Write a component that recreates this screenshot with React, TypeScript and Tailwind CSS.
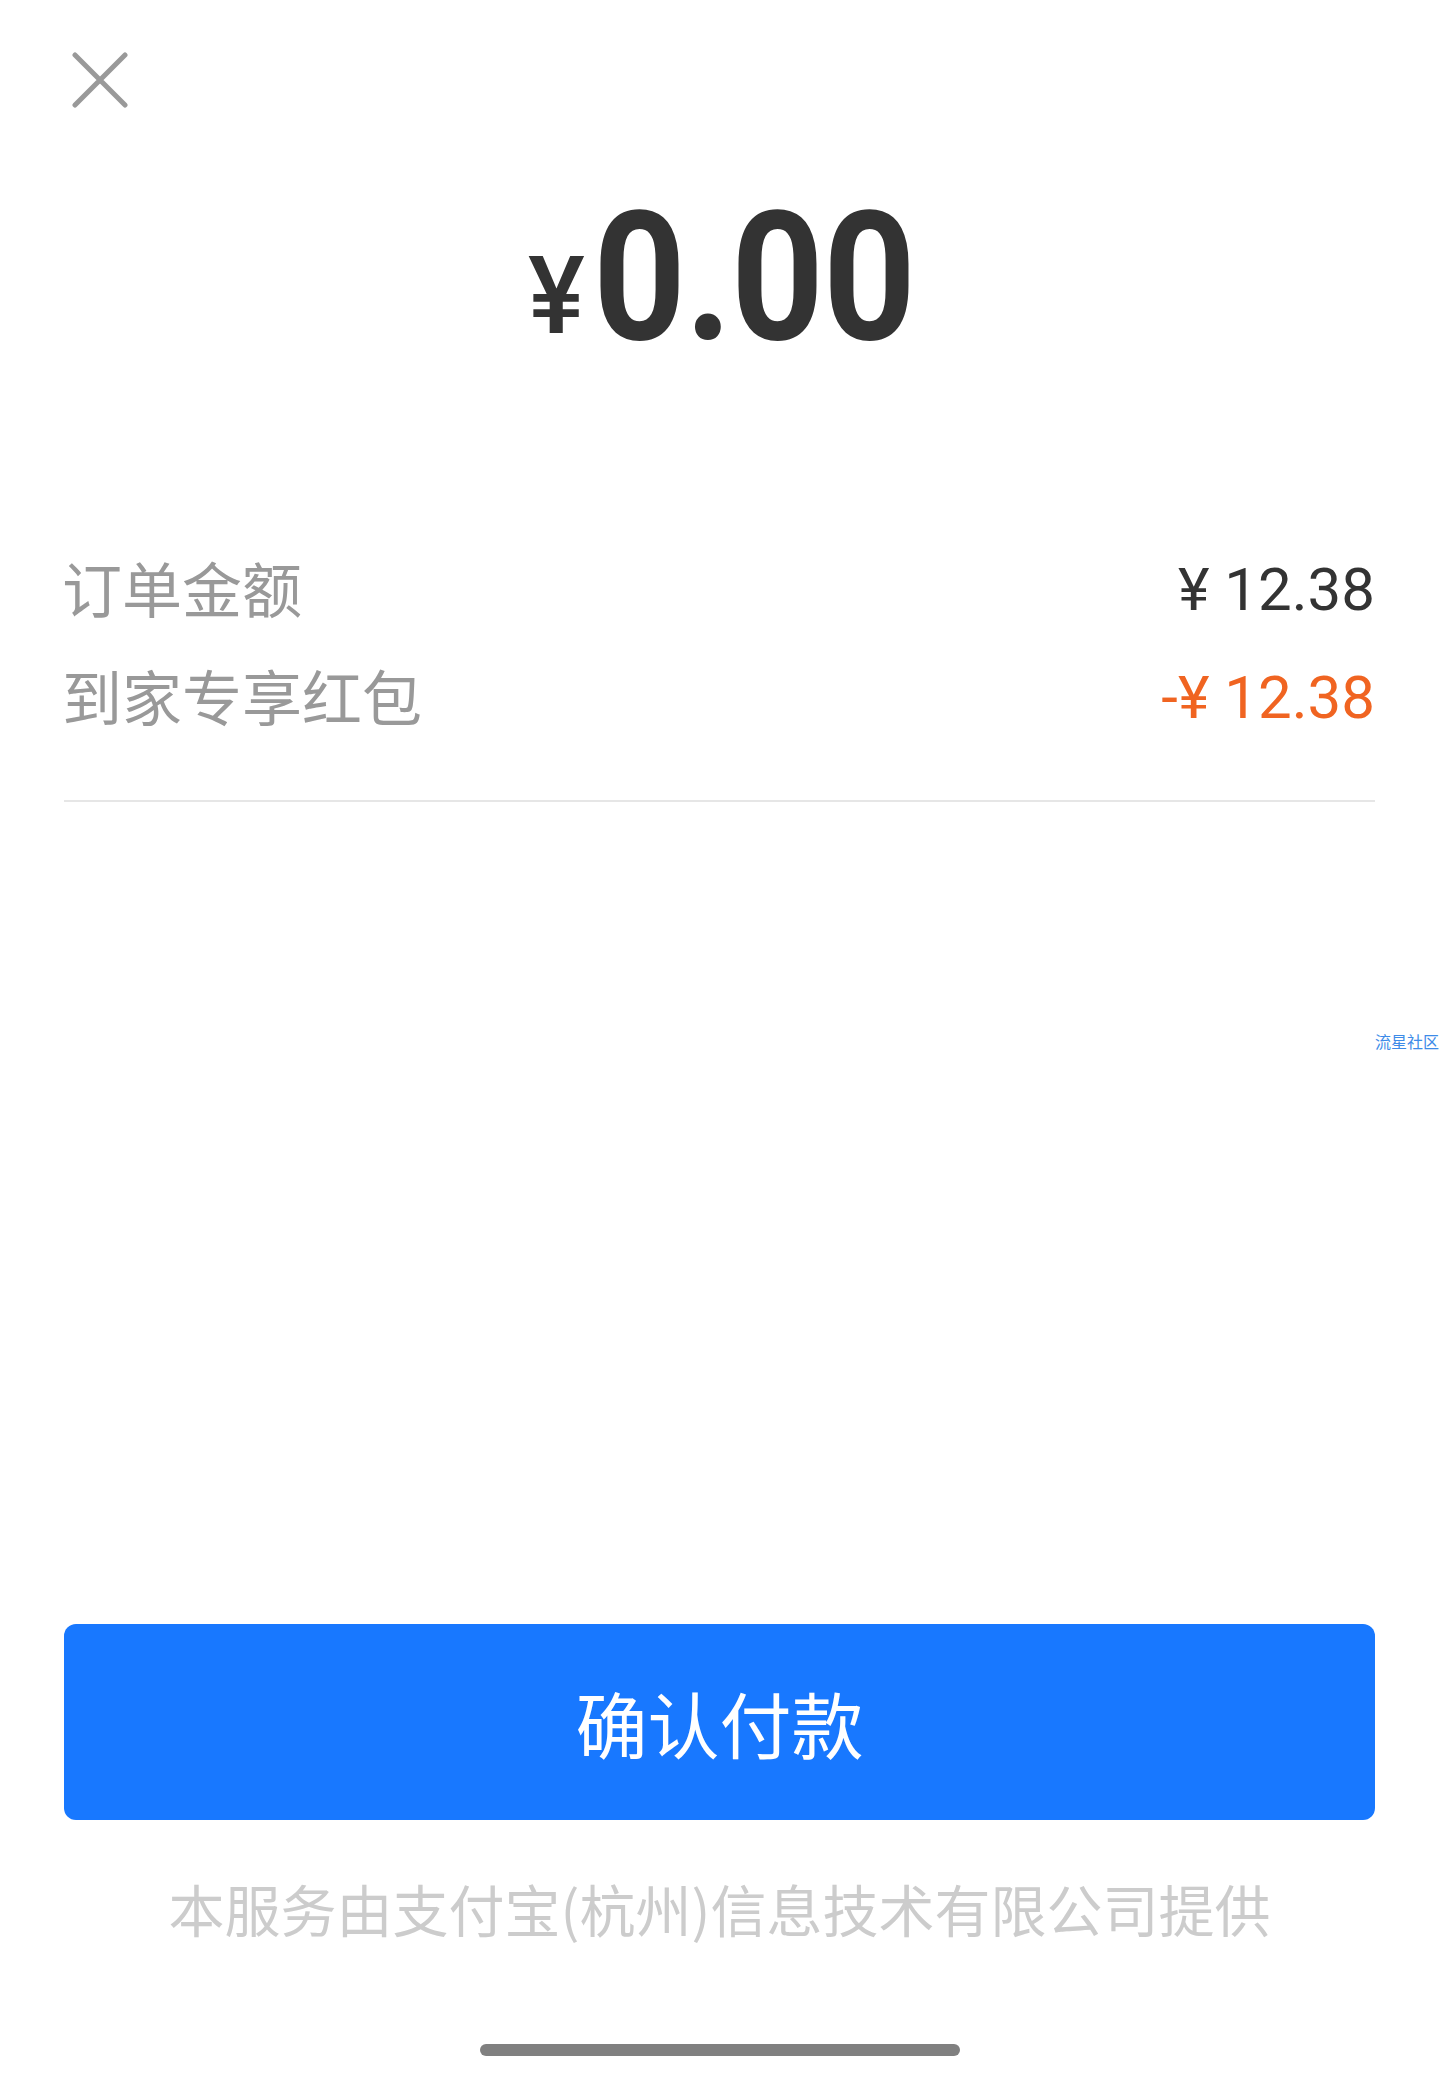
import React from "react";

export default function App() {
  return (
    <div className="relative w-[1439px] h-[2083px] bg-white flex flex-col overflow-hidden" style={{ fontFamily: "'Noto Sans CJK SC', 'Noto Sans', sans-serif" }}>
      <div className="pt-[52px] pl-[72px]">
        <svg width="56" height="56" viewBox="0 0 56 56">
          <path d="M3 3 L53 53 M53 3 L3 53" stroke="#999999" strokeWidth="5" strokeLinecap="round" fill="none" />
        </svg>
      </div>

      <div className="mt-[80px] flex justify-center items-baseline text-[#333333] font-['Roboto',sans-serif] pl-[22px]">
        <span className="text-[107px] font-medium leading-none -translate-y-[6px] mr-[6px]">¥</span>
        <span className="text-[180px] font-bold leading-none scale-x-[0.9] tracking-[-1px] -ml-[16px]">0.00</span>
      </div>

      <div className="mt-[165px] px-[64px] flex flex-col">
        <div className="h-[108px] flex items-center justify-between">
          <span className="text-[60px] leading-none text-[#999999] -ml-[2px]">订单金额</span>
          <span className="text-[60px] leading-none text-[#333333] font-['Roboto',sans-serif] translate-y-[3px]">¥ 12.38</span>
        </div>
        <div className="h-[108px] flex items-center justify-between">
          <span className="text-[60px] leading-none text-[#999999] -ml-[2px]">到家专享红包</span>
          <span className="text-[60px] leading-none text-[#f06421] font-['Roboto',sans-serif] translate-y-[3px]">-¥ 12.38</span>
        </div>
        <div className="mt-[51px] h-[2px] bg-[#e6e6e6]" />
      </div>

      <div className="flex-1" />

      <div className="px-[64px]">
        <button className="w-full h-[196px] rounded-[12px] bg-[#1878ff] text-white text-[72px] leading-none flex items-center justify-center">
          确认付款
        </button>
      </div>

      <div className="mt-[48px] h-[80px] flex items-center justify-center text-[56px] leading-none text-[#cccccc]">
        本服务由支付宝(杭州)信息技术有限公司提供
      </div>

      <div className="mt-[96px] mb-[27px] flex justify-center">
        <div className="w-[480px] h-[12px] rounded-full bg-[#808080]" />
      </div>

      <div className="absolute left-[1375px] top-[1033px] text-[16px] leading-none text-[#3d8be8] whitespace-nowrap">
        流星社区
      </div>
    </div>
  );
}
